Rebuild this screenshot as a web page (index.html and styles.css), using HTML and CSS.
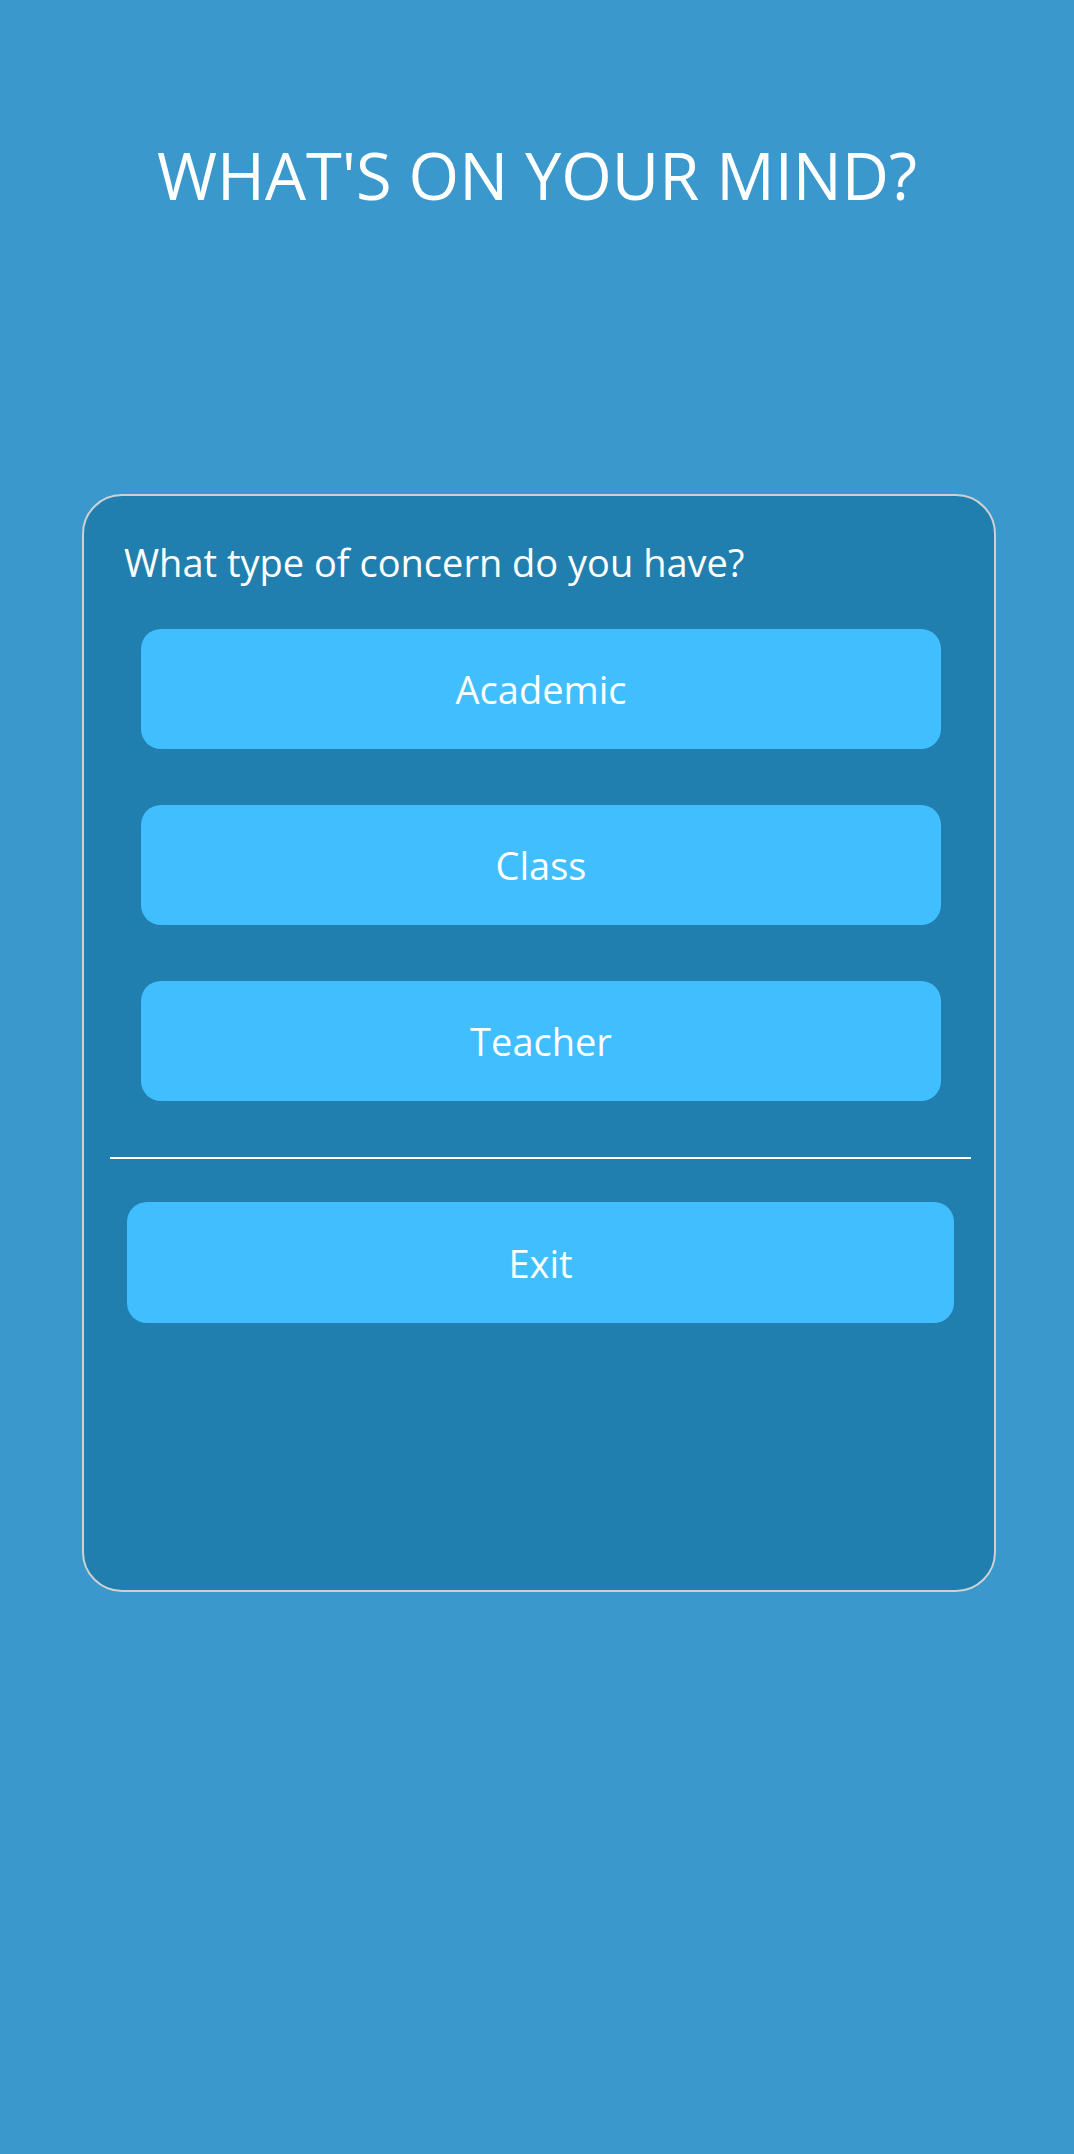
FILE: index.html
```html
<!DOCTYPE html>
<html lang="en">
<head>
<meta charset="utf-8">
<title>What's on your mind?</title>
<link rel="stylesheet" href="styles.css">
</head>
<body>
<h1 class="title">WHAT'S ON YOUR MIND?</h1>
<section class="card">
  <p class="question">What type of concern do you have?</p>
  <div class="options">
    <button class="btn">Academic</button>
    <button class="btn">Class</button>
    <button class="btn">Teacher</button>
  </div>
  <hr class="divider">
  <button class="btn exit">Exit</button>
</section>
</body>
</html>
```

FILE: styles.css
```css
html, body {
  margin: 0;
  padding: 0;
}
body {
  background: #3a98cd;
  min-height: 2154px;
  font-family: "Open Sans", "Noto Sans", sans-serif;
  color: #ffffff;
}
.title {
  margin: 0;
  padding-top: 130px;
  text-align: center;
  font-size: 65px;
  font-weight: 400;
  line-height: 90px;
  color: #ffffff;
}
.card {
  box-sizing: border-box;
  margin: 274px 78px 0 82px;
  height: 1098px;
  border: 2px solid #cdd1d4;
  border-radius: 40px;
  background: #207fae;
  padding-top: 40px;
  display: flex;
  flex-direction: column;
}
.question {
  margin: 0;
  padding-left: 40px;
  font-size: 38px;
  line-height: 52px;
}
.options {
  margin-top: 41px;
  padding: 0 53px 0 57px;
  display: flex;
  flex-direction: column;
  gap: 56px;
}
.btn {
  display: block;
  width: 100%;
  height: 120px;
  border: none;
  border-radius: 20px;
  background: #41befe;
  color: #ffffff;
  font-family: "Open Sans", "Noto Sans", sans-serif;
  font-size: 38px;
  line-height: 52px;
  padding: 0;
  text-align: center;
}
.divider {
  margin: 56px 23px 0 26px;
  height: 2px;
  border: 0;
  background: #ffffff;
}
.exit {
  margin: 43px 40px 0 43px;
  width: auto;
  height: 121px;
}
```
